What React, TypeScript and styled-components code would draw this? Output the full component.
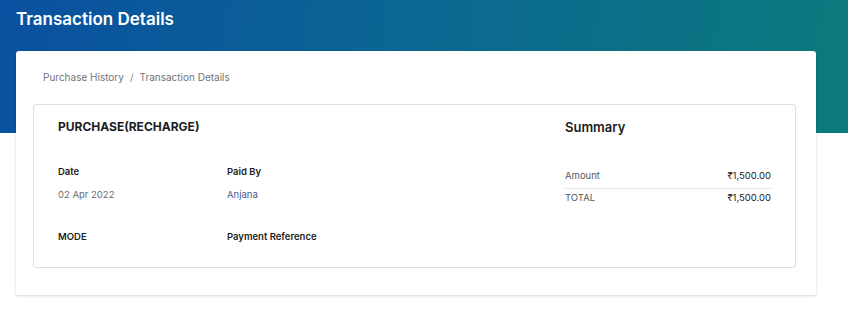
import React from "react";
import styled, { createGlobalStyle } from "styled-components";

const GlobalStyle = createGlobalStyle`
  body {
    margin: 0;
    background: #ffffff;
    font-family: "Inter", "Open Sans", sans-serif;
  }
`;

interface FieldProps {
  label: string;
  value?: string;
  accent?: boolean;
}

const Field: React.FC<FieldProps> = ({ label, value, accent }) => (
  <FieldBox>
    <FieldLabel>{label}</FieldLabel>
    {value && <FieldValue $accent={accent}>{value}</FieldValue>}
  </FieldBox>
);

const App: React.FC = () => {
  return (
    <>
      <GlobalStyle />
      <Page>
        <Header>
          <Title>Transaction Details</Title>
        </Header>
        <Card>
          <Breadcrumb>
            <Crumb>Purchase History</Crumb>
            <Slash>/</Slash>
            <Crumb>Transaction Details</Crumb>
          </Breadcrumb>
          <Inner>
            <Left>
              <SectionTitle>PURCHASE(RECHARGE)</SectionTitle>
              <Fields>
                <Field label="Date" value="02 Apr 2022" />
                <Field label="Paid By" value="Anjana" accent />
                <Field label="MODE" />
                <Field label="Payment Reference" />
              </Fields>
            </Left>
            <Right>
              <SummaryTitle>Summary</SummaryTitle>
              <SummaryRows>
                <SummaryRow $divider>
                  <span>Amount</span>
                  <Money>₹1,500.00</Money>
                </SummaryRow>
                <SummaryRow>
                  <span>TOTAL</span>
                  <Money>₹1,500.00</Money>
                </SummaryRow>
              </SummaryRows>
            </Right>
          </Inner>
        </Card>
      </Page>
    </>
  );
};

const Page = styled.div`
  position: relative;
  width: 848px;
  height: 315px;
  overflow: hidden;
`;

const Header = styled.div`
  height: 133px;
  background: linear-gradient(100deg, #0a50a0 0%, #0b6892 50%, #0b7b7c 100%);
  padding: 9px 16px 0;
  box-sizing: border-box;
`;

const Title = styled.h1`
  margin: 0;
  color: #ffffff;
  font-size: 17px;
  font-weight: 600;
  line-height: 20px;
`;

const Card = styled.div`
  position: absolute;
  top: 51px;
  left: 16px;
  width: 800px;
  height: 244px;
  box-sizing: border-box;
  background: #ffffff;
  border-radius: 3px;
  box-shadow: 0 1px 3px rgba(0, 0, 0, 0.18);
  padding: 19px 20px 0 17px;
`;

const Breadcrumb = styled.div`
  display: flex;
  align-items: center;
  gap: 6px;
  padding-left: 10px;
  font-size: 10px;
  color: #6f7378;
  height: 14px;
`;

const Crumb = styled.span``;

const Slash = styled.span`
  color: #888;
`;

const Inner = styled.div`
  margin-top: 20px;
  height: 164px;
  box-sizing: border-box;
  border: 1px solid #dedede;
  border-radius: 3px;
  display: flex;
  padding: 14px 24px 0 24px;
`;

const Left = styled.div`
  width: 507px;
`;

const SectionTitle = styled.h2`
  margin: 0;
  font-size: 12px;
  font-weight: 700;
  color: #1c1d22;
  line-height: 16px;
`;

const Fields = styled.div`
  margin-top: 30px;
  display: grid;
  grid-template-columns: 169px 1fr;
  row-gap: 29px;
`;

const FieldBox = styled.div`
  display: flex;
  flex-direction: column;
  gap: 10px;
`;

const FieldLabel = styled.div`
  font-size: 9.5px;
  font-weight: 600;
  color: #1c1d22;
  line-height: 13px;
`;

const FieldValue = styled.div<{ $accent?: boolean }>`
  font-size: 9.5px;
  color: ${(p) => (p.$accent ? "#4a5a94" : "#6b6e73")};
  line-height: 13px;
`;

const Right = styled.div`
  flex: 1;
`;

const SummaryTitle = styled.h2`
  margin: 0;
  font-size: 13px;
  font-weight: 600;
  color: #1c1d22;
  line-height: 16px;
`;

const SummaryRows = styled.div`
  margin-top: 34px;
  display: flex;
  flex-direction: column;
`;

const SummaryRow = styled.div<{ $divider?: boolean }>`
  display: flex;
  justify-content: space-between;
  font-size: 9.5px;
  color: #55585d;
  height: 13px;
  line-height: 13px;
  padding: ${(p) => (p.$divider ? "0 0 6px" : "2px 0 0")};
  border-bottom: ${(p) => (p.$divider ? "1px solid #e3e3e3" : "none")};
`;

const Money = styled.span`
  color: #1c1d22;
`;

export default App;
